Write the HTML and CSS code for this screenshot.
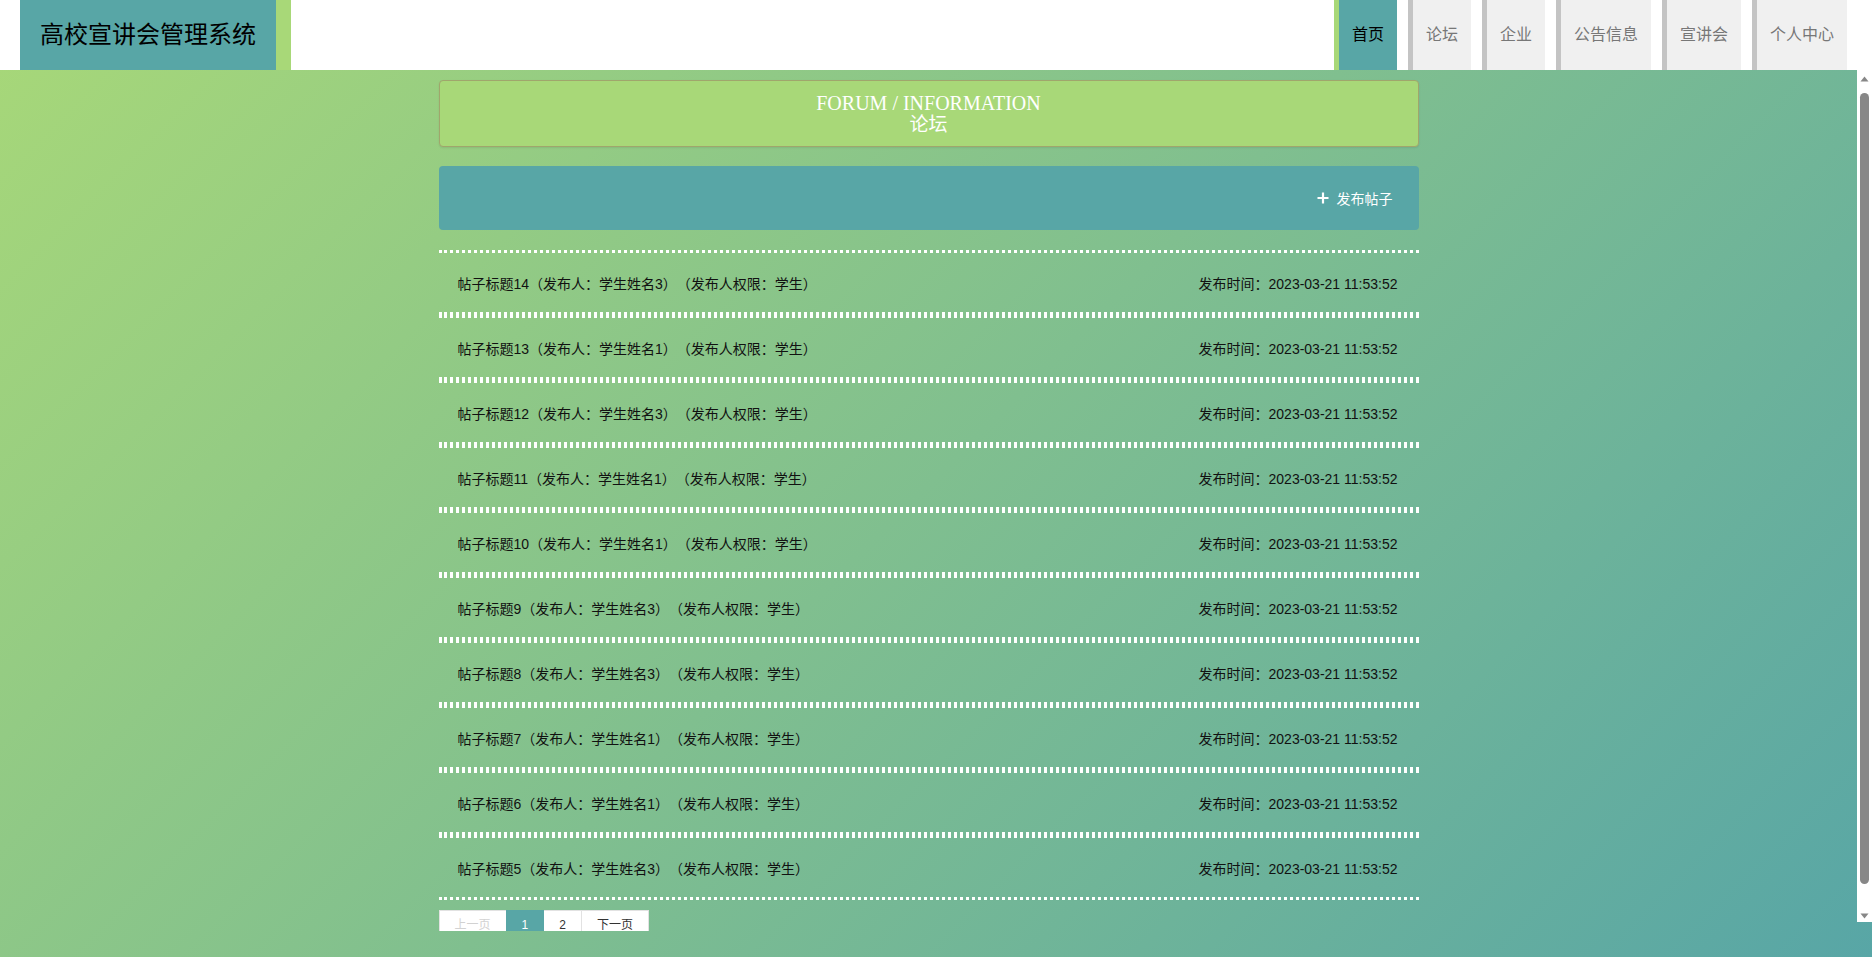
FILE: index.html
```html
<!DOCTYPE html>
<html lang="zh-CN">
<head>
<meta charset="utf-8">
<title>高校宣讲会管理系统</title>
<link rel="stylesheet" href="styles.css">
</head>
<body>
<header class="topbar">
  <div class="logo">高校宣讲会管理系统</div>
  <nav class="menu">
    <a class="menu-item active">首页</a>
    <a class="menu-item">论坛</a>
    <a class="menu-item">企业</a>
    <a class="menu-item">公告信息</a>
    <a class="menu-item">宣讲会</a>
    <a class="menu-item">个人中心</a>
  </nav>
</header>
<div class="body-wrap">
  <main class="main">
    <div class="container">
      <div class="page-title">
        <div class="title-en">FORUM / INFORMATION</div>
        <div class="title-cn">论坛</div>
      </div>
      <div class="toolbar">
        <button class="add-btn" type="button">
          <svg class="plus" viewBox="0 0 12 12" width="12" height="12" aria-hidden="true"><path d="M6 0.5V11.5M0.5 6H11.5" stroke="#fff" stroke-width="2.2" fill="none"/></svg>
          <span>发布帖子</span>
        </button>
      </div>
      <ul class="post-list">
        <li class="post"><span class="post-title">帖子标题14（发布人：学生姓名3）（发布人权限：学生）</span><span class="post-time">发布时间：2023-03-21 11:53:52</span></li>
        <li class="post"><span class="post-title">帖子标题13（发布人：学生姓名1）（发布人权限：学生）</span><span class="post-time">发布时间：2023-03-21 11:53:52</span></li>
        <li class="post"><span class="post-title">帖子标题12（发布人：学生姓名3）（发布人权限：学生）</span><span class="post-time">发布时间：2023-03-21 11:53:52</span></li>
        <li class="post"><span class="post-title">帖子标题11（发布人：学生姓名1）（发布人权限：学生）</span><span class="post-time">发布时间：2023-03-21 11:53:52</span></li>
        <li class="post"><span class="post-title">帖子标题10（发布人：学生姓名1）（发布人权限：学生）</span><span class="post-time">发布时间：2023-03-21 11:53:52</span></li>
        <li class="post"><span class="post-title">帖子标题9（发布人：学生姓名3）（发布人权限：学生）</span><span class="post-time">发布时间：2023-03-21 11:53:52</span></li>
        <li class="post"><span class="post-title">帖子标题8（发布人：学生姓名3）（发布人权限：学生）</span><span class="post-time">发布时间：2023-03-21 11:53:52</span></li>
        <li class="post"><span class="post-title">帖子标题7（发布人：学生姓名1）（发布人权限：学生）</span><span class="post-time">发布时间：2023-03-21 11:53:52</span></li>
        <li class="post"><span class="post-title">帖子标题6（发布人：学生姓名1）（发布人权限：学生）</span><span class="post-time">发布时间：2023-03-21 11:53:52</span></li>
        <li class="post"><span class="post-title">帖子标题5（发布人：学生姓名3）（发布人权限：学生）</span><span class="post-time">发布时间：2023-03-21 11:53:52</span></li>
      </ul>
      <div class="pager">
        <a class="page-btn disabled">上一页</a>
        <span class="page-btn current">1</span>
        <a class="page-btn">2</a>
        <a class="page-btn">下一页</a>
      </div>
    </div>
  </main>
  <div class="scrollbar" aria-hidden="true">
    <svg class="sb-arrow" viewBox="0 0 15 15" width="15" height="15"><path d="M3.5 11.5L7.5 6.5L11.5 11.5Z" fill="#878787"/></svg>
    <div class="sb-thumb"></div>
    <div class="sb-space"></div>
    <svg class="sb-arrow" viewBox="0 0 15 15" width="15" height="15"><path d="M3.5 6.5L7.5 11.5L11.5 6.5Z" fill="#878787"/></svg>
  </div>
</div>
</body>
</html>
```

FILE: styles.css
```css
* {
  box-sizing: border-box;
}

html, body {
  margin: 0;
  padding: 0;
  height: 100%;
}

body {
  font-family: "Liberation Sans", "Noto Sans CJK SC", sans-serif;
  background: linear-gradient(135deg, #a8d878 0%, #58a6a6 100%);
  overflow: hidden;
  display: flex;
  flex-direction: column;
  text-spacing-trim: space-all;
}

/* ---------- header ---------- */
.topbar {
  flex: none;
  height: 70px;
  background: #fff;
  display: flex;
  justify-content: space-between;
  align-items: stretch;
  padding: 0 25px 0 20px;
}

.logo {
  background: #58a6a6;
  border-right: 15px solid #a8d878;
  color: #000;
  font-size: 24px;
  line-height: 70px;
  padding: 0 20px;
  white-space: nowrap;
}

.menu {
  display: flex;
  align-items: stretch;
  gap: 11px;
}

.menu-item {
  display: block;
  height: 70px;
  line-height: 70px;
  font-size: 16px;
  padding: 0 13px;
  background: #f0f0f0;
  color: #777;
  border-left: 5px solid #c4c4c4;
  text-decoration: none;
  white-space: nowrap;
  cursor: pointer;
}

.menu-item.active {
  background: #58a6a6;
  color: #000;
  border-left-color: #a8d878;
}

/* ---------- main ---------- */
.body-wrap {
  flex: none;
  display: flex;
  align-items: flex-start;
  height: calc(100vh - 96px);
}

.main {
  flex: 1;
  height: 100%;
  overflow-y: auto;
}

.scrollbar {
  flex: none;
  width: 15px;
  height: calc(100% - 9px);
  background: #fff;
  display: flex;
  flex-direction: column;
  align-items: center;
}

.sb-arrow {
  display: block;
  flex: none;
}

.sb-thumb {
  flex: none;
  width: 9px;
  height: 791px;
  margin-top: 8px;
  background: #878787;
  border-radius: 5px;
}

.sb-space {
  flex: 1;
}

.container {
  width: 980px;
  margin: 0 auto;
  padding: 10px 0 12px;
}

.page-title {
  height: 67px;
  background: #a8d878;
  border: 1px solid #a0a66c;
  border-radius: 4px;
  box-shadow: 0 1px 2px rgba(0, 0, 0, 0.08);
  display: flex;
  flex-direction: column;
  align-items: center;
  justify-content: center;
  color: #fff;
  font-family: "Liberation Serif", "Noto Sans CJK SC", serif;
}

.title-en {
  font-size: 20px;
  line-height: 22px;
}

.title-cn {
  font-size: 19px;
  line-height: 22px;
}

.toolbar {
  margin-top: 19px;
  height: 64px;
  background: #58a6a6;
  border-radius: 4px;
  display: flex;
  justify-content: flex-end;
  align-items: center;
  padding-right: 26px;
}

.add-btn {
  display: flex;
  align-items: center;
  gap: 8px;
  background: transparent;
  border: 0;
  padding: 0;
  color: #fff;
  font-family: inherit;
  font-size: 14px;
  cursor: pointer;
}

.plus {
  display: block;
}

/* ---------- post list ---------- */
.post-list {
  list-style: none;
  margin: 20px 0 0;
  padding: 0;
}

.post {
  height: 65px;
  border-top: 3px dotted #fff;
  border-bottom: 3px dotted #fff;
  display: flex;
  justify-content: space-between;
  align-items: center;
  padding: 0 21px 0 19px;
  font-size: 14px;
  color: #111;
}

/* ---------- pager ---------- */
.pager {
  margin-top: 10px;
  display: flex;
  margin-bottom: 5px;
}

.page-btn {
  display: block;
  height: 28px;
  line-height: 28px;
  padding: 0 15px;
  margin-right: -1px;
  background: #fff;
  border: 1px solid #e2e2e2;
  color: #333;
  font-size: 12px;
  text-decoration: none;
  cursor: pointer;
}

.page-btn.disabled {
  color: #d2d2d2;
  cursor: not-allowed;
}

.page-btn.current {
  background: #58a6a6;
  border-color: #58a6a6;
  color: #fff;
  position: relative;
}
```
